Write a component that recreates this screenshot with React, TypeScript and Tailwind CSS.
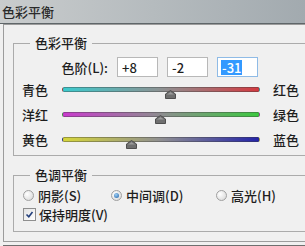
import React from "react";

function Thumb({ left }: { left: number }) {
  return (
    <svg
      className="absolute top-[2px]"
      style={{ left: left - 5 }}
      width="11"
      height="9"
      viewBox="0 0 11 9"
    >
      <polygon points="5.5,0.5 10.5,4 10.5,8.5 0.5,8.5 0.5,4" fill="#6f6f6f" stroke="#4f4f4f" strokeWidth="1" />
      <polygon points="5.5,2 9,4.5 2,4.5" fill="#9a9a9a" />
    </svg>
  );
}

function SliderRow({
  left,
  right,
  grad,
  value,
}: {
  left: string;
  right: string;
  grad: string;
  value: number;
}) {
  const w = 198;
  const pos = ((value + 100) / 200) * w;
  return (
    <div className="flex h-[25px] items-center pl-[8px]">
      <span className="w-[40px]">{left}</span>
      <div className={`relative h-[5px] w-[198px] rounded-full border border-[rgba(60,60,60,0.4)] ${grad}`}>
        <Thumb left={pos} />
      </div>
      <span className="ml-[13px]">{right}</span>
    </div>
  );
}

function Radio({ checked, label, w }: { checked?: boolean; label: string; w: string }) {
  return (
    <div className={`flex items-center ${w}`}>
      <span className="flex h-[11px] w-[11px] items-center justify-center rounded-full border border-[#a0a0a0] bg-[radial-gradient(circle_at_35%_35%,#ffffff,#d4d4d4)]">
        {checked && (
          <span className="h-[5px] w-[5px] rounded-full bg-[radial-gradient(circle_at_40%_35%,#9fd0f5,#1e5fa6)]" />
        )}
      </span>
      <span className="ml-[4px]">{label}</span>
    </div>
  );
}

export default function App() {
  return (
    <div className="h-[246px] w-[305px] overflow-hidden bg-[#f0f0f0] text-[13px] font-medium leading-none text-[#1e1e1e] [font-family:'Noto_Sans_CJK_SC','Noto_Sans',sans-serif]">
      <div className="h-[24px] border-b border-[#5f6669] bg-[linear-gradient(to_right,#c9cccd,#b5bbbe_50%,#a2aaaf)] pl-[2px] pt-[5px] text-[#2a2a2a]">
        色彩平衡
      </div>
      <div className="pl-[3px]">
        <div className="h-[218px] border-b border-l border-t border-[#9c9c9c] pl-[9px] pt-[9px]">
          <fieldset className="border-b border-l border-t border-[#ababab] pb-[3px]">
            <legend className="ml-[16px] px-[5px] leading-[18px]">色彩平衡</legend>
            <div className="mt-[5px] flex h-[20px] items-center">
              <span className="ml-[40px] w-[54px] text-right">色阶(L):</span>
              <div className="ml-[9px] flex gap-[9px]">
                <div className="flex h-[20px] w-[41px] items-center border border-[#b8b8b8] bg-white pl-[4px]">+8</div>
                <div className="flex h-[20px] w-[41px] items-center border border-[#b8b8b8] bg-white pl-[4px]">-2</div>
                <div className="flex h-[20px] w-[41px] items-center border border-[#8fbbe6] bg-white pl-[3px]">
                  <span className="bg-[#3399ff] px-[1px] py-[1px] text-white">-31</span>
                </div>
              </div>
            </div>
            <SliderRow
              left="青色"
              right="红色"
              value={8}
              grad="bg-[linear-gradient(to_right,#3ccacd,#8d9293_50%,#d23a40)]"
            />
            <SliderRow
              left="洋红"
              right="绿色"
              value={-2}
              grad="bg-[linear-gradient(to_right,#c83ccc,#8d8d8f_50%,#3cc840)]"
            />
            <SliderRow
              left="黄色"
              right="蓝色"
              value={-31}
              grad="bg-[linear-gradient(to_right,#d6d63a,#8f8f92_50%,#2424a8)]"
            />
          </fieldset>
          <fieldset className="mt-[10px] border-b border-l border-t border-[#ababab] pb-[7px]">
            <legend className="ml-[16px] px-[5px] leading-[18px]">色调平衡</legend>
            <div className="mt-[2px] flex h-[19px] items-center pl-[9px]">
              <Radio label="阴影(S)" w="w-[88px]" />
              <Radio label="中间调(D)" w="w-[105px]" checked />
              <Radio label="高光(H)" w="w-[80px]" />
            </div>
            <div className="flex h-[19px] items-center pl-[9px]">
              <span className="flex h-[13px] w-[13px] items-center justify-center border border-[#8f8f8f] bg-[linear-gradient(135deg,#e2e2e2,#ffffff)]">
                <svg width="9" height="9" viewBox="0 0 9 9">
                  <path d="M1.5 4.5 L3.8 6.8 L7.5 2" fill="none" stroke="#233f7c" strokeWidth="1.6" />
                </svg>
              </span>
              <span className="ml-[3px]">保持明度(V)</span>
            </div>
          </fieldset>
        </div>
        <div className="mt-[3px] h-[1px] bg-[#6f6f6f]" />
      </div>
    </div>
  );
}
